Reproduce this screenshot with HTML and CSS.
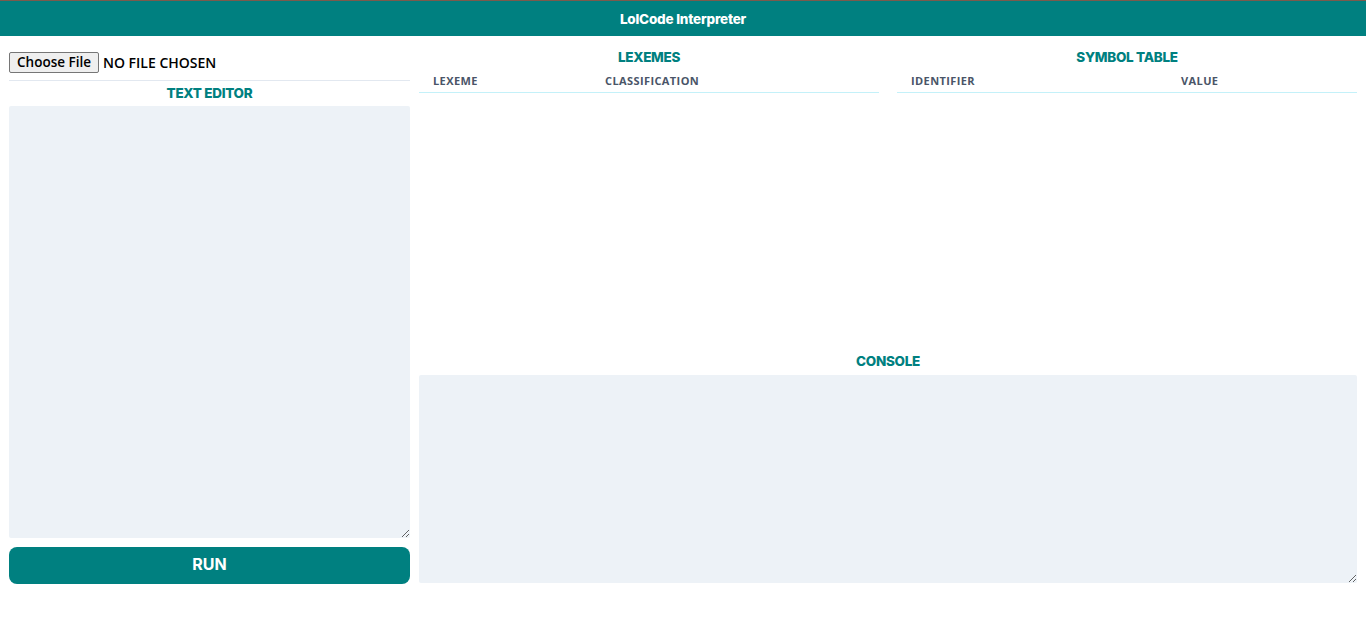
FILE: index.html
```html
<!DOCTYPE html>
<html>
<head>
<meta charset="utf-8">
<title>LolCode Interpreter</title>
<link rel="stylesheet" href="styles.css">
</head>
<body>
<header class="topbar">LolCode Interpreter</header>
<main class="layout">
  <section class="left">
    <div class="file-row">
      <button class="file-btn" type="button">Choose File</button>
      <span class="file-name">NO FILE CHOSEN</span>
    </div>
    <hr class="divider">
    <h2 class="heading">TEXT EDITOR</h2>
    <textarea class="editor"></textarea>
    <button class="run" type="button">RUN</button>
  </section>
  <section class="right">
    <div class="tables">
      <div class="panel">
        <h2 class="heading">LEXEMES</h2>
        <div class="thead lex">
          <span>LEXEME</span>
          <span>CLASSIFICATION</span>
        </div>
      </div>
      <div class="panel">
        <h2 class="heading">SYMBOL TABLE</h2>
        <div class="thead sym">
          <span>IDENTIFIER</span>
          <span>VALUE</span>
        </div>
      </div>
    </div>
    <h2 class="heading">CONSOLE</h2>
    <textarea class="console"></textarea>
  </section>
</main>
</body>
</html>
```
FILE: styles.css
```css
* { box-sizing: border-box; }
html, body { margin: 0; padding: 0; background: #fff; }
body { font-family: "Open Sans", "Liberation Sans", sans-serif; }

.topbar {
  height: 36px;
  border-top: 1px solid #7c5a4c;
  background: #008080;
  color: #fff;
  font-family: Inter, Roboto, sans-serif;
  font-weight: 800;
  font-size: 13.5px;
  letter-spacing: -0.2px;
  display: flex;
  align-items: center;
  justify-content: center;
}

.layout {
  display: flex;
  padding: 0 9px;
  gap: 9px;
}

.left {
  width: 401px;
  flex: none;
  display: flex;
  flex-direction: column;
  padding-top: 16px;
}

.file-row {
  display: flex;
  align-items: center;
  height: 21px;
}
.file-btn {
  font-family: "Open Sans", "Liberation Sans", sans-serif;
  font-size: 13.5px;
  font-weight: 600;
  color: #000;
  background: #efefef;
  border: 1px solid #767676;
  border-radius: 2px;
  height: 21px;
  width: 90px;
  padding: 0 4px 1px;
  line-height: 17px;
}
.file-name {
  margin-left: 4px;
  font-size: 14px;
  font-weight: 600;
  color: #000;
}

.divider {
  border: 0;
  border-top: 1px solid #e2e8f0;
  margin: 7px 0 0;
}

.heading {
  margin: 0;
  text-align: center;
  color: #008080;
  font-family: Inter, Roboto, sans-serif;
  font-weight: 800;
  font-size: 13.5px;
  letter-spacing: -0.3px;
  line-height: 18px;
}
.left .heading { margin-top: 3px; }

.editor {
  margin-top: 4px;
  width: 401px;
  height: 432px;
  background: #edf2f7;
  border: 0;
  border-radius: 2px;
  resize: vertical;
  display: block;
}

.run {
  margin-top: 9px;
  height: 37px;
  width: 401px;
  border: 0;
  border-radius: 8px;
  background: #008080;
  color: #fff;
  font-family: Inter, Roboto, sans-serif;
  font-weight: 700;
  font-size: 16px;
  line-height: 33px;
  padding: 0 0 2px;
}

.right {
  flex: 1;
  display: flex;
  flex-direction: column;
  padding-top: 12px;
}

.tables {
  display: flex;
  gap: 18px;
  height: 304px;
}
.panel { width: 460px; }

.thead {
  display: grid;
  margin-top: 8px;
  border-bottom: 1px solid #c4f1f9;
  padding: 0 0 4px 14px;
  font-size: 11px;
  font-weight: 700;
  letter-spacing: 0.4px;
  color: #4a5568;
  line-height: 14px;
}
.thead.lex { grid-template-columns: 172px 1fr; }
.thead.sym { grid-template-columns: 270px 1fr; }

.console {
  margin-top: 5px;
  width: 938px;
  height: 208px;
  background: #edf2f7;
  border: 0;
  border-radius: 2px;
  display: block;
}
```
